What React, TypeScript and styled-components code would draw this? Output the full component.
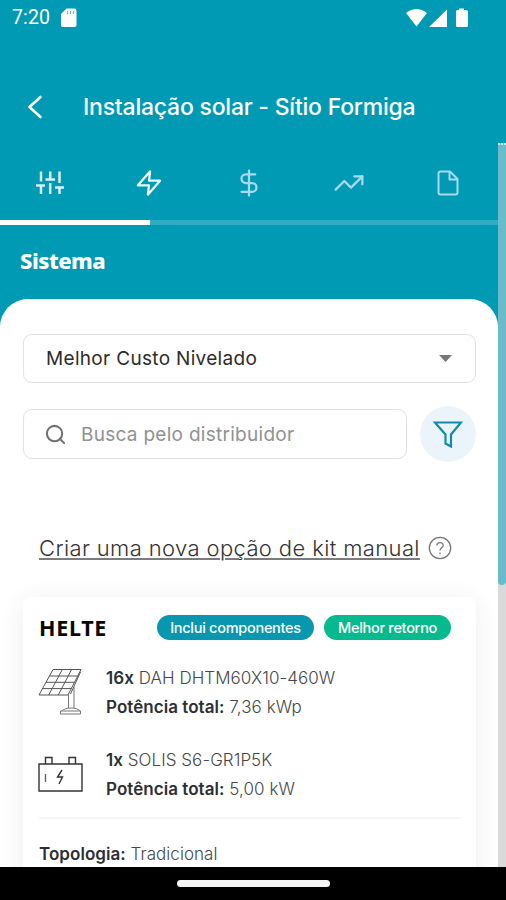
import React from "react";
import styled, { createGlobalStyle } from "styled-components";
import { DollarSign, TrendingUp, Search } from "lucide-react";

const teal = "#009ab4";

const GlobalStyle = createGlobalStyle`
  * { box-sizing: border-box; }
  body { margin: 0; background: #fff; font-family: Inter, "Liberation Sans", sans-serif; }
  svg { display: block; flex: none; }
`;

const Screen = styled.div`
  width: 506px;
  height: 900px;
  display: flex;
  flex-direction: column;
  overflow: hidden;
  background: ${teal};
`;

const StatusBar = styled.header`
  height: 36px;
  flex: none;
  display: flex;
  align-items: center;
  justify-content: space-between;
  padding: 0 37px 0 12px;
  color: #fff;
`;

const StatusGroup = styled.div`
  display: flex;
  align-items: center;
`;

const Clock = styled.span`
  width: 49px;
  font: 400 19.5px/36px Roboto, sans-serif;
  letter-spacing: 0.1px;
`;

const AppBar = styled.div`
  height: 107px;
  flex: none;
  display: flex;
  align-items: center;
  padding: 35px 0 0 26px;
  color: #fff;
`;

const BackButton = styled.button`
  display: flex;
  width: 57px;
  padding: 0;
  border: 0;
  background: none;
  color: inherit;
`;

const Title = styled.h1`
  margin: 0;
  font-size: 23px;
  font-weight: 500;
  line-height: 30px;
  letter-spacing: -0.22px;
  white-space: nowrap;
`;

const Body = styled.div`
  height: 724px;
  flex: none;
  display: flex;
`;

const Content = styled.main`
  width: 498px;
  display: flex;
  flex-direction: column;
  overflow: hidden;
`;

const ScrollTrack = styled.div`
  width: 8px;
  background: #dadada;
`;

const ScrollThumb = styled.div`
  height: 442px;
  border-top: 2px dotted #c9e8ee;
  border-radius: 0 0 4px 4px;
  background: #6bbccb;
`;

const Tabs = styled.nav`
  height: 77px;
  flex: none;
  display: grid;
  grid-template-columns: repeat(5, 1fr);
  align-items: center;
  justify-items: center;
  padding-top: 2px;
`;

const Tab = styled.span<{ $color: string }>`
  color: ${(p) => p.$color};
`;

const Progress = styled.div`
  height: 5px;
  flex: none;
  background: #2eacc1;
`;

const ProgressFill = styled.div`
  width: 150px;
  height: 5px;
  background: #fff;
`;

const SectionTitle = styled.h2`
  height: 74px;
  flex: none;
  margin: 0;
  padding: 18px 0 0 20px;
  font: 800 22px/34px "Noto Sans", sans-serif;
  letter-spacing: -0.5px;
  color: #fff;
`;

const Panel = styled.section`
  flex: 1;
  min-height: 0;
  padding: 35px 22px 0 23px;
  border-radius: 28px 28px 0 0;
  background: #fff;
`;

const Select = styled.div`
  height: 49px;
  display: flex;
  align-items: center;
  justify-content: space-between;
  padding: 0 23px 0 22px;
  border: 1.5px solid #dfe2e3;
  border-radius: 9px;
  font-size: 19px;
  letter-spacing: 0.32px;
  color: #2c2c2c;
`;

const SearchRow = styled.div`
  display: flex;
  align-items: center;
  gap: 13px;
  margin-top: 23px;
`;

const SearchField = styled.div`
  width: 384px;
  height: 50px;
  display: flex;
  align-items: center;
  gap: 14px;
  padding: 0 20px;
  border: 1.5px solid #dfe2e3;
  border-radius: 9px;
  color: #717171;
`;

const Placeholder = styled.span`
  font-size: 19px;
  letter-spacing: 0.28px;
  color: #8e9295;
`;

const FilterButton = styled.button`
  width: 56px;
  height: 56px;
  display: grid;
  place-items: center;
  padding: 0;
  border: 0;
  border-radius: 50%;
  background: #ebf4fa;
`;

const ManualKit = styled.div`
  height: 36px;
  display: flex;
  align-items: center;
  gap: 9px;
  margin: 68px 0 0 16px;
`;

const ManualLink = styled.a`
  width: 380px;
  font-size: 22px;
  font-weight: 300;
  letter-spacing: 0.38px;
  white-space: nowrap;
  color: #333;
  text-decoration: underline;
  text-decoration-thickness: 2px;
  text-decoration-color: #7c7c7c;
  text-underline-offset: 2px;
`;

const KitCard = styled.article`
  height: 360px;
  margin-top: 31px;
  padding: 16px 15px 0 16px;
  border-radius: 8px;
  background: #fff;
  box-shadow: 0 4px 24px rgba(40, 60, 60, 0.09);
`;

const KitHeader = styled.div`
  height: 29px;
  display: flex;
  align-items: center;
`;

const Brand = styled.h3`
  width: 118px;
  margin: 0;
  font: 700 21.5px/28px "Noto Sans", sans-serif;
  letter-spacing: 0.7px;
  color: #080808;
`;

const Badge = styled.span<{ $bg: string; $width: number }>`
  width: ${(p) => p.$width}px;
  height: 25px;
  margin-right: 10px;
  border-radius: 13px;
  background: ${(p) => p.$bg};
  color: #fff;
  font-size: 14.5px;
  font-weight: 500;
  line-height: 25px;
  letter-spacing: -0.28px;
  text-align: center;
  white-space: nowrap;
`;

const Item = styled.div<{ $top: number }>`
  height: 58px;
  display: flex;
  align-items: center;
  margin-top: ${(p) => p.$top}px;
`;

const ItemIcon = styled.span`
  width: 68px;
  margin-left: -1px;
  padding-bottom: 2px;
`;

const Line = styled.p`
  margin: 0;
  font-size: 17px;
  font-weight: 300;
  line-height: 29px;
  letter-spacing: 0.05px;
  white-space: nowrap;
  color: #484848;

  b { font-weight: 600; color: #2c3035; }
`;

const Divider = styled.hr`
  height: 2px;
  margin: 13px 0 21px;
  border: 0;
  background: #f5f6f6;
`;

const SystemNav = styled.footer`
  height: 33px;
  flex: none;
  display: flex;
  justify-content: center;
  padding-top: 13px;
  background: #000;
`;

const HomeHandle = styled.div`
  width: 153px;
  height: 7px;
  border-radius: 4px;
  background: #f4f4f4;
`;

const SlidersIcon = () => (
  <svg width="28" height="24" viewBox="0 0 28 24" fill="none" stroke="currentColor" strokeWidth="2.5">
    <path d="M5 .5v10M0 14.500h9M5 14.500V23M14.200 .5v8M9.500 8.500h9.500M14.200 12v11M23.500 .5v11.500M19 16.500h9M23.500 16.500v6.500" />
  </svg>
);

const BoltIcon = () => (
  <svg width="28" height="28" viewBox="0 0 24 24" fill="none" stroke="currentColor" strokeWidth="1.9" strokeLinejoin="round">
    <path d="M13 2 2.500 14H12l-1 8 10.500-12H12z" />
  </svg>
);

const SolarPanelIcon = () => (
  <svg width="46" height="50" viewBox="0 0 46 50" fill="none" stroke="#555" strokeWidth="1">
    <path d="M15 2.500h28L30 28H1zM24.300 2.500 10.700 28M33.600 2.500 20.300 28M11.500 9h28M8 15.300h28.500M4.500 21.600h29M42.500 5 32.500 27" />
    <path d="M30.500 28v13M36 20v21M23.500 44c4-4 15-4 19 0M22.500 44h20v3h-20z" stroke="#777" />
  </svg>
);

const BatteryIcon = () => (
  <svg width="46" height="38" viewBox="0 0 46 38" fill="none" stroke="#333" strokeWidth="1.400">
    <path d="M1 9h43v27H1zM7.500 9V2.500h6.500V9M31 9V2.500h6.500V9" />
    <path d="M7.500 19v8" stroke="#666" />
    <path d="m24 15-4.500 7h5L21 29" />
  </svg>
);

export default function App() {
  return (
    <Screen>
      <GlobalStyle />
      <StatusBar>
        <StatusGroup>
          <Clock>7:20</Clock>
          <svg width="16" height="20" viewBox="0 0 16 20">
            <path d="M5.500 0.500H13.500Q15.500 .5 15.500 2.500V17Q15.500 19 13.500 19H2Q0 19 0 17V6z" fill="#fff" />
            <path d="M6.500 3v3M9.500 3v3M12.500 3v3" stroke="#6bbccb" strokeWidth="1.300" />
          </svg>
        </StatusGroup>
        <svg width="63" height="20" viewBox="0 0 63 20" fill="#fff">
          <path d="M0 5Q10.500-3 21 5L10.500 18.500zM23 19 41 1.500V19zM50 3.500Q50 2 51.500 2H53V.5h5V2h1.500Q62 2 62 3.500V17.500Q62 19 60.500 19h-9Q50 19 50 17.500z" />
        </svg>
      </StatusBar>
      <AppBar>
        <BackButton aria-label="Voltar">
          <svg width="18" height="24" viewBox="0 0 18 24" fill="none" stroke="currentColor" strokeWidth="2.600" strokeLinecap="round" strokeLinejoin="round">
            <path d="M14.500 2 3.500 12 14.500 22" />
          </svg>
        </BackButton>
        <Title>Instalação solar - Sítio Formiga</Title>
      </AppBar>
      <Body>
        <Content>
          <Tabs>
            <Tab $color="#d9f1f8"><SlidersIcon /></Tab>
            <Tab $color="#ebfaff"><BoltIcon /></Tab>
            <Tab $color="#a8d9ee"><DollarSign size={30} strokeWidth={1.8} /></Tab>
            <Tab $color="#a8d9ee"><TrendingUp size={32} strokeWidth={1.7} /></Tab>
            <Tab $color="#a8d9ee">
              <svg width="22" height="26" viewBox="0 0 22 26" fill="none" stroke="currentColor" strokeWidth="2" strokeLinejoin="round">
                <path d="M3.500 1.500H13L20.500 9V22.500Q20.500 24.500 18.500 24.500H3.500Q1.500 24.500 1.500 22.500V3.500Q1.500 1.500 3.500 1.500zM12.500 2v7.500h8" />
              </svg>
            </Tab>
          </Tabs>
          <Progress><ProgressFill /></Progress>
          <SectionTitle>Sistema</SectionTitle>
          <Panel>
            <Select>
              Melhor Custo Nivelado
              <svg width="13" height="7" viewBox="0 0 13 7"><path d="M0 0h13L6.500 7z" fill="#777" /></svg>
            </Select>
            <SearchRow>
              <SearchField>
                <Search size={23} strokeWidth={2.2} />
                <Placeholder>Busca pelo distribuidor</Placeholder>
              </SearchField>
              <FilterButton aria-label="Filtrar">
                <svg width="30" height="28" viewBox="0 0 30 28" fill="none" stroke="#138ca5" strokeWidth="2.200">
                  <path d="M2 2.500h26L18 14.500V26.500L12.500 23.500V14.500z" />
                </svg>
              </FilterButton>
            </SearchRow>
            <ManualKit>
              <ManualLink>Criar uma nova opção de kit manual</ManualLink>
              <svg width="24" height="24" viewBox="0 0 24 24" fill="none" stroke="#777" strokeWidth="1.300">
                <circle cx="12" cy="12" r="10.700" />
                <path d="M8.800 9.500C9 5.500 15.500 5.800 15.200 9.500 15 11.800 12 12 12 14.500M12 16.500v1.800" />
              </svg>
            </ManualKit>
            <KitCard>
              <KitHeader>
                <Brand>HELTE</Brand>
                <Badge $bg="#0797af" $width={157}>Inclui componentes</Badge>
                <Badge $bg="#06ba8d" $width={127}>Melhor retorno</Badge>
              </KitHeader>
              <Item $top={22}>
                <ItemIcon><SolarPanelIcon /></ItemIcon>
                <div>
                  <Line><b>16x</b> DAH DHTM60X10-460W</Line>
                  <Line><b>Potência total:</b> 7,36 kWp</Line>
                </div>
              </Item>
              <Item $top={24}>
                <ItemIcon><BatteryIcon /></ItemIcon>
                <div>
                  <Line><b>1x</b> SOLIS S6-GR1P5K</Line>
                  <Line><b>Potência total:</b> 5,00 kW</Line>
                </div>
              </Item>
              <Divider />
              <Line><b>Topologia:</b> Tradicional</Line>
            </KitCard>
          </Panel>
        </Content>
        <ScrollTrack><ScrollThumb /></ScrollTrack>
      </Body>
      <SystemNav><HomeHandle /></SystemNav>
    </Screen>
  );
}
